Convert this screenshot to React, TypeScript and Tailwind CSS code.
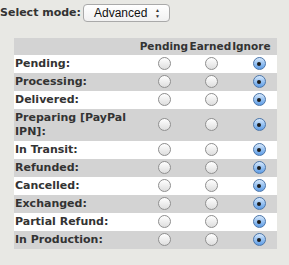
import React from "react";

const statuses = [
  "Pending:",
  "Processing:",
  "Delivered:",
  "Preparing [PayPal IPN]:",
  "In Transit:",
  "Refunded:",
  "Cancelled:",
  "Exchanged:",
  "Partial Refund:",
  "In Production:",
];

const Radio: React.FC<{ checked?: boolean }> = ({ checked }) =>
  checked ? (
    <span className="inline-flex w-[13px] h-[13px] rounded-full border border-[#4f77a8] bg-gradient-to-b from-[#d6e8fb] via-[#97c2f2] to-[#5e9de6] items-center justify-center align-middle">
      <span className="w-[4px] h-[4px] rounded-full bg-[#1c1c1c]" />
    </span>
  ) : (
    <span className="inline-block w-[13px] h-[13px] rounded-full border border-[#8f8f8f] bg-gradient-to-b from-white to-[#dedede] align-middle" />
  );

export default function App() {
  return (
    <div className="w-[289px] h-[265px] bg-[#e8e8e4] font-['DejaVu_Sans',sans-serif] text-[11px] text-[#333]">
      {/* mode picker */}
      <div className="flex items-center h-[25px] pt-[1px]">
        <span className="font-bold text-[11px] text-[#333] w-[83px]">Select mode:</span>
        <div className="flex items-center w-[87px] h-[18px] rounded-[4px] border border-[#a9a9a9] bg-gradient-to-b from-white to-[#f1f1f1] pl-[10px] pr-[9px] font-['Liberation_Sans',sans-serif] text-[12px] text-[#111]">
          <span className="flex-1">Advanced</span>
          <span className="flex flex-col items-center leading-none text-[5px] text-[#333]">
            <span className="mb-[1px]">▲</span>
            <span>▼</span>
          </span>
        </div>
      </div>

      {/* status table */}
      <table className="ml-[14px] mt-[13px] w-[263px] border-collapse font-bold">
        <thead>
          <tr className="bg-[#d3d3d3] h-[17px] text-[10.5px]">
            <th className="w-[127px]" />
            <th className="w-[49px] text-left font-bold leading-[17px] p-0">Pending</th>
            <th className="w-[41px] text-left font-bold leading-[17px] p-0 pl-[1px]">Earned</th>
            <th className="w-[46px] text-left font-bold leading-[17px] p-0 pl-[1px]">Ignore</th>
          </tr>
        </thead>
        <tbody>
          {statuses.map((s, i) => (
            <tr key={s} className={i % 2 === 0 ? "bg-white" : "bg-[#d3d3d3]"}>
              <td className="pl-[1px] pr-[4px] py-[2px] leading-[14px] align-top">{s}</td>
              <td className="text-center p-0 align-middle">
                <span className="relative left-[0px]">
                  <Radio />
                </span>
              </td>
              <td className="text-center p-0 align-middle">
                <span className="relative left-[2px]">
                  <Radio />
                </span>
              </td>
              <td className="text-center p-0 align-middle">
                <span className="relative left-[5px]">
                  <Radio checked />
                </span>
              </td>
            </tr>
          ))}
        </tbody>
      </table>
    </div>
  );
}
